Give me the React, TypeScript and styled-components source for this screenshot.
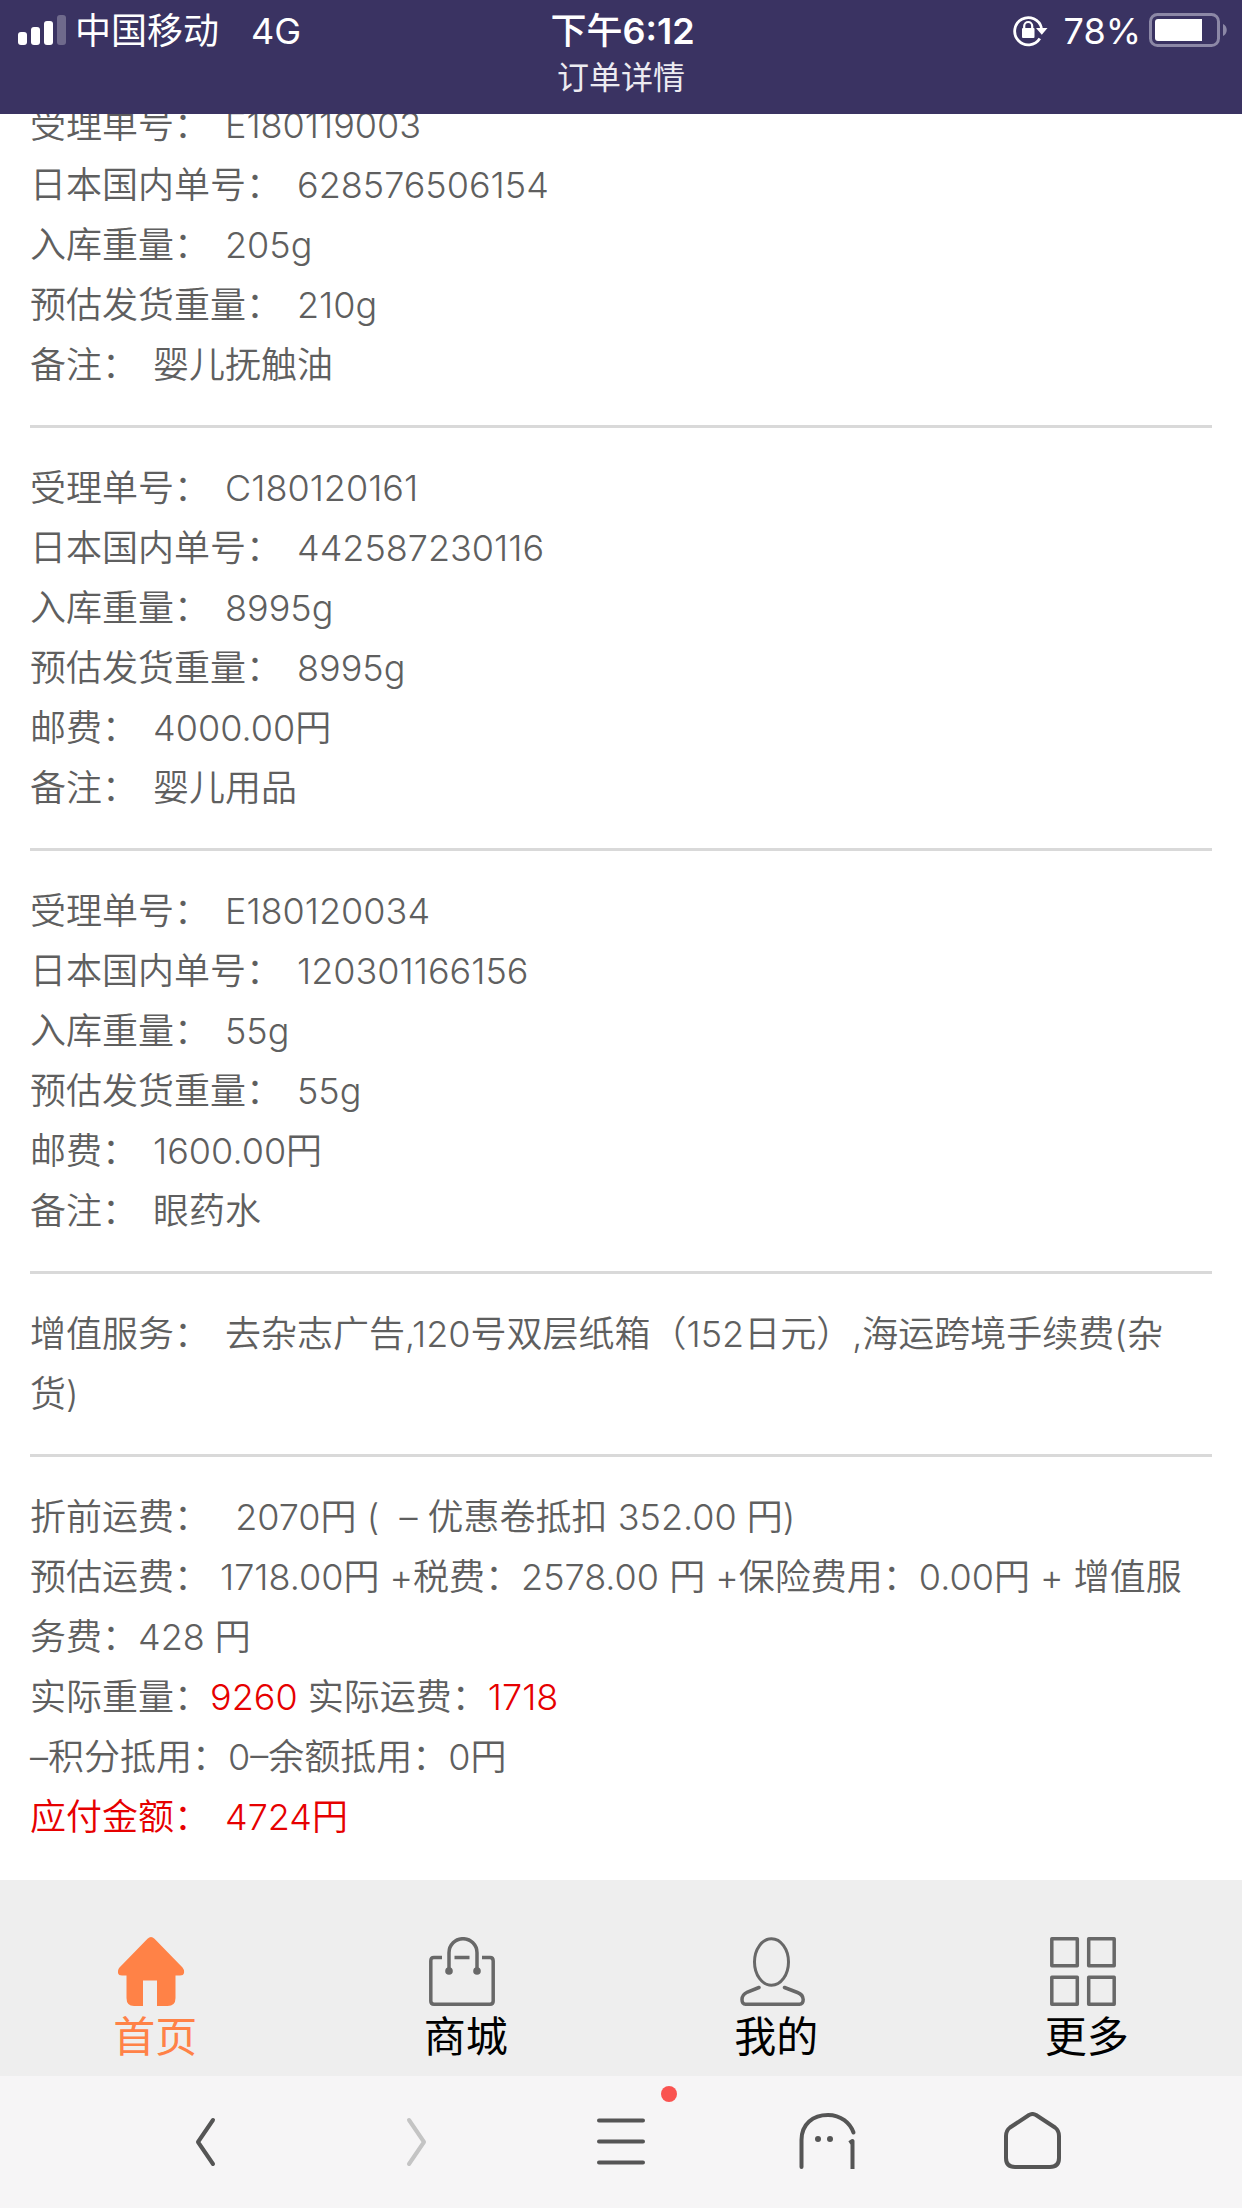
import React from 'react';
import styled, { createGlobalStyle, css } from 'styled-components';

const GlobalStyle = createGlobalStyle`
  * { box-sizing: border-box; }
  body {
    margin: 0;
    background: #fff;
    font-family: Inter, "Noto Sans CJK SC", sans-serif;
    -webkit-font-smoothing: antialiased;
  }
`;

const Page = styled.div`
  display: flex;
  flex-direction: column;
  height: 100vh;
`;

const Header = styled.header`
  flex: none;
  height: 114px;
  background: #3a3362;
  color: #fff;
`;

const StatusBar = styled.div`
  display: grid;
  grid-template-columns: 1fr auto 1fr;
  height: 62px;
  padding: 0 15px 0 18px;
  font-size: 36px;
  line-height: 62px;
`;

const StatusGroup = styled.div<{ $end?: boolean }>`
  display: flex;
  align-items: flex-start;
  justify-content: ${(p) => (p.$end ? 'flex-end' : 'flex-start')};
  gap: 8px;
`;

const Network = styled.span`
  margin-left: 24px;
`;

const Percent = styled.span`
  margin-left: 8px;
`;

const Clock = styled.span`
  font-weight: 500;
`;

const ClockDigits = styled.span`
  font-weight: 600;
`;

const Title = styled.h1`
  margin: 0;
  font-size: 32px;
  font-weight: 400;
  line-height: 32px;
  text-align: center;
  color: #ecebf1;
`;

const Scroller = styled.main`
  display: flex;
  flex: 1;
  flex-direction: column-reverse;
  min-height: 0;
  overflow-y: auto;
  scrollbar-width: none;
`;

const Content = styled.div`
  flex: none;
  padding: 0 30px 3px;
`;

const Section = styled.section`
  padding: 30px 0;
  font-size: 36px;
  font-weight: 350;
  line-height: 60px;
  color: #5f5f5f;

  & + & {
    border-top: 3px solid #d9d9d9;
  }
`;

const Line = styled.p<{ $due?: boolean }>`
  margin: 0;
  padding-right: 8px;
  ${(p) =>
    p.$due &&
    css`
      color: #e60000;
    `}
`;

const Label = styled.span<{ $tight?: boolean }>`
  margin-right: ${(p) => (p.$tight ? '10px' : '15px')};
`;

const Red = styled.span`
  color: #e60000;
`;

const TabBar = styled.nav`
  display: grid;
  flex: none;
  grid-template-columns: repeat(4, 1fr);
  height: 196px;
  padding-top: 57px;
  background: #eee;
`;

const Tab = styled.a<{ $active?: boolean }>`
  display: flex;
  flex-direction: column;
  align-items: center;
  font-size: 42px;
  font-weight: 400;
  line-height: 60px;
  text-decoration: none;
  color: ${(p) => (p.$active ? '#ff8247' : '#000')};
`;

const BrowserBar = styled.div`
  display: grid;
  flex: none;
  grid-template-columns: repeat(5, 1fr);
  height: 132px;
  padding: 0 8.5%;
  background: #f6f5f6;
`;

const ToolButton = styled.button`
  position: relative;
  display: flex;
  align-items: center;
  justify-content: center;
  padding: 0;
  border: 0;
  background: none;
  color: #555;

  &:disabled {
    color: #c4c4c4;
  }
`;

const Dot = styled.span`
  position: absolute;
  top: 10px;
  left: calc(50% + 40px);
  width: 16px;
  height: 16px;
  border-radius: 50%;
  background: #fa5350;
`;

const SignalIcon = () => (
  <svg width="49" height="60" viewBox="0 0 49 60" fill="currentColor" aria-hidden="true">
    <rect x="0" y="32" width="9" height="13" rx="3" />
    <rect x="13" y="27" width="9" height="18" rx="3" />
    <rect x="26" y="21" width="9" height="24" rx="3" />
    <rect x="39" y="15" width="9" height="30" rx="3" opacity=".27" />
  </svg>
);

const LockIcon = () => (
  <svg width="35" height="60" viewBox="0 0 35 60" fill="none" stroke="currentColor" aria-hidden="true">
    <path d="M26.800 38.500A13.600 13.600 0 1 1 28.500 28" strokeWidth="2.800" />
    <path d="M23 28H34.500L28.800 34.800Z" fill="currentColor" stroke="none" />
    <rect x="9" y="28" width="12.500" height="10" rx="1" fill="currentColor" stroke="none" />
    <path d="M11.200 29V26a4 4 0 0 1 8 0V29" strokeWidth="2.200" />
  </svg>
);

const BatteryIcon = () => (
  <svg width="78" height="60" viewBox="0 0 78 60" aria-hidden="true">
    <rect x="1.500" y="14.500" width="68" height="31" rx="7" fill="none" stroke="#8c88a6" strokeWidth="3" />
    <path d="M74 24c5 2 5 10 0 12z" fill="#8c88a6" />
    <path d="M9 19H53V41H9a3 3 0 0 1-3-3V22a3 3 0 0 1 3-3z" fill="#fff" />
  </svg>
);

const HomeTabIcon = () => (
  <svg width="74" height="70" viewBox="0 0 74 70" fill="currentColor" aria-hidden="true">
    <path d="M29.500 1.700Q33 -1.500 36.500 1.700L64.500 30.500Q66.500 33 66 36Q65.500 38.500 62 38.500H57.500V61Q57.500 69 49.500 69H39V43.500H25V69H16Q8.500 69 8.500 61V38.500H4Q.500 38.500 0 36Q-.500 33 1.500 30.500Z" />
  </svg>
);

const BagIcon = () => (
  <svg width="74" height="70" viewBox="0 0 74 70" fill="none" stroke="#686868" strokeWidth="3.500" aria-hidden="true">
    <path d="M13 20.500H5Q1.800 20.500 1.800 24V64Q1.800 67.200 5 67.200H61Q64.200 67.200 64.200 64V24Q64.200 20.500 61 20.500H53M25.500 20.500H40.500" />
    <path d="M20 34V15.700a14 14 0 0 1 28 0V34" />
    <circle cx="20" cy="34" r="3.800" fill="#686868" stroke="none" />
    <circle cx="48" cy="34" r="3.800" fill="#686868" stroke="none" />
  </svg>
);

const UserIcon = () => (
  <svg width="74" height="70" viewBox="0 0 74 70" fill="none" stroke="#686868" strokeWidth="3.500" strokeLinecap="round" aria-hidden="true">
    <ellipse cx="32.500" cy="25" rx="17" ry="23.300" strokeWidth="3" />
    <path d="M20 50.500L8.500 55Q3 57.500 3 62.500Q3 67.200 6.500 67.200H60.500Q64.200 67.200 64.200 62.500Q64 57.500 58.500 55.500L45.500 50.500" />
  </svg>
);

const MoreIcon = () => (
  <svg width="74" height="70" viewBox="0 0 74 70" fill="none" stroke="#686868" strokeWidth="3.500" strokeLinejoin="round" aria-hidden="true">
    <rect x="1.800" y="1.800" width="25.500" height="27" />
    <rect x="38.700" y="1.800" width="25.500" height="27" />
    <rect x="1.800" y="40.200" width="25.500" height="27" />
    <rect x="38.700" y="40.200" width="25.500" height="27" />
  </svg>
);

const ToolIcon = ({ children }: { children: React.ReactNode }) => (
  <svg
    width="60"
    height="60"
    viewBox="0 0 60 60"
    fill="none"
    stroke="currentColor"
    strokeWidth="4"
    strokeLinecap="round"
    strokeLinejoin="round"
    aria-hidden="true"
  >
    {children}
  </svg>
);

type Parcel = [string, string][];

const parcels: Parcel[] = [
  [
    ['受理单号', 'E180119003'],
    ['日本国内单号', '628576506154'],
    ['入库重量', '205g'],
    ['预估发货重量', '210g'],
    ['备注', '婴儿抚触油'],
  ],
  [
    ['受理单号', 'C180120161'],
    ['日本国内单号', '442587230116'],
    ['入库重量', '8995g'],
    ['预估发货重量', '8995g'],
    ['邮费', '4000.00円'],
    ['备注', '婴儿用品'],
  ],
  [
    ['受理单号', 'E180120034'],
    ['日本国内单号', '120301166156'],
    ['入库重量', '55g'],
    ['预估发货重量', '55g'],
    ['邮费', '1600.00円'],
    ['备注', '眼药水'],
  ],
];

const tabs = [
  { label: '首页', Icon: HomeTabIcon, active: true },
  { label: '商城', Icon: BagIcon },
  { label: '我的', Icon: UserIcon },
  { label: '更多', Icon: MoreIcon },
];

export default function App() {
  return (
    <Page lang="zh-CN">
      <GlobalStyle />
      <Header>
        <StatusBar>
          <StatusGroup>
            <SignalIcon />
            <span>中国移动</span>
            <Network>4G</Network>
          </StatusGroup>
          <Clock>
            下午<ClockDigits>6:12</ClockDigits>
          </Clock>
          <StatusGroup $end>
            <LockIcon />
            <Percent>78%</Percent>
            <BatteryIcon />
          </StatusGroup>
        </StatusBar>
        <Title>订单详情</Title>
      </Header>

      <Scroller>
        <Content>
          {parcels.map((rows) => (
            <Section key={rows[0][1]}>
              {rows.map(([label, value]) => (
                <Line key={label}>
                  <Label>{`${label}：`}</Label>
                  {value}
                </Line>
              ))}
            </Section>
          ))}
          <Section>
            <Line>
              <Label>增值服务：</Label>
              去杂志广告,120号双层纸箱（152日元）,海运跨境手续费(杂货)
            </Line>
          </Section>
          <Section>
            <Line>
              <Label>折前运费：</Label>
              {'\u00a02070円 (\u00a0 – 优惠卷抵扣 352.00 円)'}
            </Line>
            <Line>
              <Label $tight>预估运费：</Label>
              1718.00円 +税费：2578.00 円 +保险费用：0.00円 + 增值服务费：428 円
            </Line>
            <Line>
              实际重量：<Red>9260</Red> 实际运费：<Red>1718</Red>
            </Line>
            <Line>–积分抵用：0–余额抵用：0円</Line>
            <Line $due>
              <Label>应付金额：</Label>
              4724円
            </Line>
          </Section>
        </Content>
      </Scroller>

      <TabBar>
        {tabs.map(({ label, Icon, active }) => (
          <Tab key={label} href="#" $active={active}>
            <Icon />
            {label}
          </Tab>
        ))}
      </TabBar>

      <BrowserBar>
        <ToolButton type="button" aria-label="后退">
          <ToolIcon>
            <path d="M34 8L19 30L34 52" />
          </ToolIcon>
        </ToolButton>
        <ToolButton type="button" aria-label="前进" disabled>
          <ToolIcon>
            <path d="M24 8L39 30L24 52" />
          </ToolIcon>
        </ToolButton>
        <ToolButton type="button" aria-label="菜单">
          <ToolIcon>
            <path d="M8 8.500H52M8 29.500H52M8 50.500H52" />
          </ToolIcon>
          <Dot />
        </ToolButton>
        <ToolButton type="button" aria-label="窗口">
          <ToolIcon>
            <path d="M4.500 55V28C4.500 12 16 3 31 3C44 3 53 11 56.500 20.500" />
            <path d="M52.500 31L55.500 29V57" strokeLinecap="butt" />
            <circle cx="21" cy="27" r="3" fill="currentColor" stroke="none" />
            <circle cx="33" cy="27" r="3" fill="currentColor" stroke="none" />
          </ToolIcon>
        </ToolButton>
        <ToolButton type="button" aria-label="主页">
          <ToolIcon>
            <path d="M26 3Q29.500 1 33 3L52 15.500Q56 18.500 56 24V46Q56 55 47 55H12Q3 55 3 46V24Q3 18.500 7 15.500Z" />
          </ToolIcon>
        </ToolButton>
      </BrowserBar>
    </Page>
  );
}
